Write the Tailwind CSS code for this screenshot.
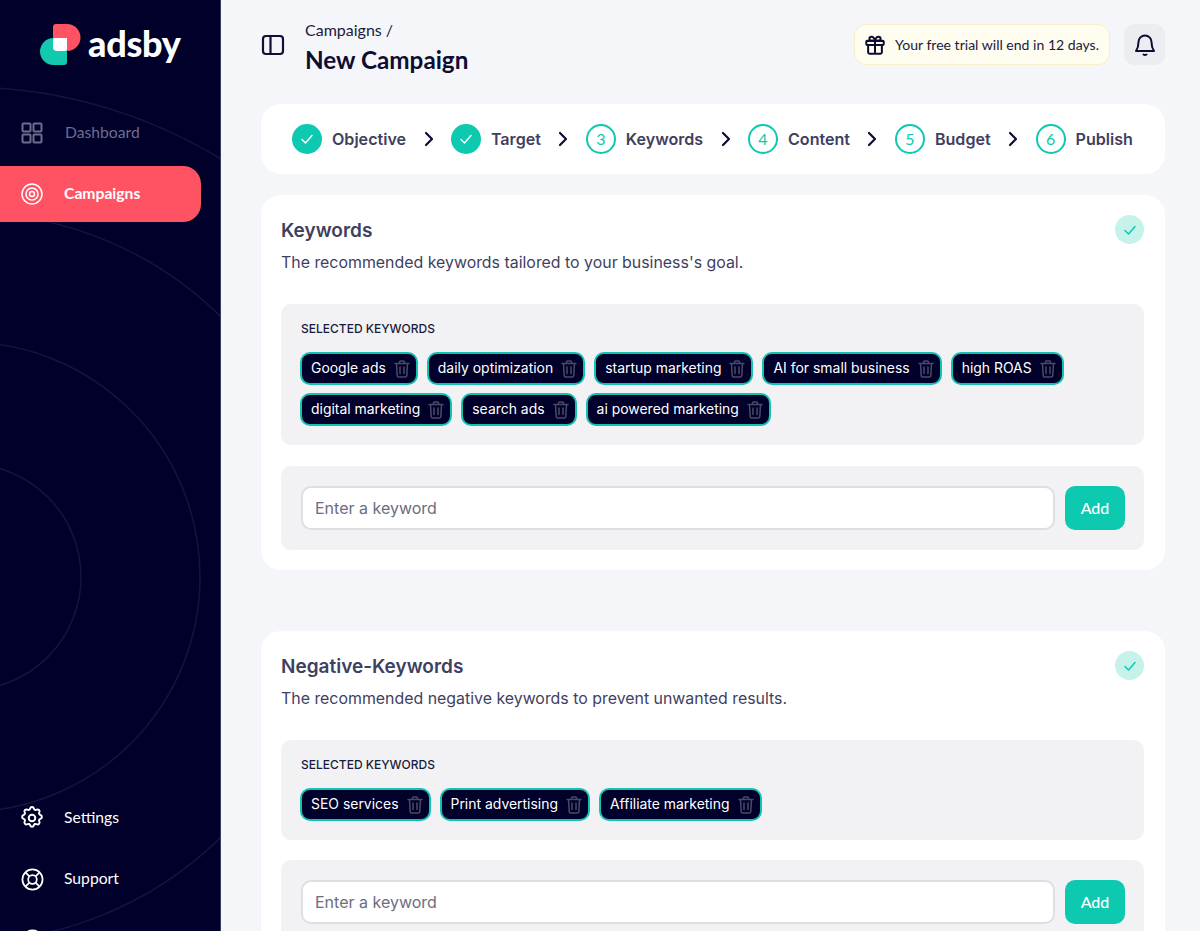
<!DOCTYPE html>
<html lang="en">
<head>
<meta charset="utf-8">
<title>New Campaign</title>
<script src="https://cdn.jsdelivr.net/npm/@tailwindcss/browser@4"></script>
</head>
<body class="m-0 overflow-hidden">
<div class="flex h-[931px] w-[1200px] overflow-hidden bg-[#f5f6f9] font-['Lato',sans-serif]">
  <aside class="relative flex h-[931px] w-[221px] shrink-0 flex-col overflow-hidden border-r border-[#3b3b60] bg-[#00002a]">
    <svg class="absolute left-0 top-0" width="220" height="931" fill="none" stroke="#15153a" stroke-width="1.5">
      <circle cx="-32" cy="577" r="113"/><circle cx="-35" cy="577" r="235"/><circle cx="-35" cy="577" r="365"/><circle cx="-35" cy="577" r="490"/>
    </svg>
    <div class="relative flex h-[105px] shrink-0 items-start pl-[40px] pt-[24px]">
      <svg width="41" height="42" viewBox="0 0 41 42" class="shrink-0">
        <path d="M13 3a3 3 0 0 1 3-3h11a13.500 13.500 0 0 1 0 27H13z" fill="#ff5364"/>
        <path d="M27 14v24a3 3 0 0 1-3 3H13.500a13.500 13.500 0 0 1 0-27z" fill="#12c9ad"/>
        <path d="M15 14h12v11a2 2 0 0 1-2 2h-8a4 4 0 0 1-4-4v-7a2 2 0 0 1 2-2z" fill="#fff"/>
      </svg>
      <span class="ml-[7px] mt-[-3px] text-[36px] font-black leading-[44px] tracking-[-0.3px] text-white">adsby</span>
    </div>
    <nav class="relative flex shrink-0 flex-col gap-[5px] pr-[19px]">
      <a class="flex h-[56px] items-center gap-[22px] pl-[21px] text-[15.7px] text-[#6d6d8e]">
        <svg width="22" height="22" viewBox="0 0 22 22" fill="none" stroke="#6d6d8e" stroke-width="2"><rect x="1.500" y="1.500" width="8" height="8" rx="1"/><rect x="12.500" y="1.500" width="8" height="8" rx="1"/><rect x="1.500" y="12.500" width="8" height="8" rx="1"/><rect x="12.500" y="12.500" width="8" height="8" rx="1"/></svg>
        <span>Dashboard</span>
      </a>
      <a class="flex h-[56px] items-center gap-[21px] rounded-r-[18px] bg-[#ff5364] pl-[21px] text-[15.7px] font-bold text-white">
        <svg width="22" height="22" viewBox="0 0 22 22" fill="none" stroke="#fff" stroke-width="1.500"><circle cx="11" cy="11" r="10"/><circle cx="11" cy="11" r="6"/><circle cx="11" cy="11" r="2.500"/></svg>
        <span>Campaigns</span>
      </a>
    </nav>
    <nav class="relative mt-[568px] flex shrink-0 flex-col gap-[5px] pr-[19px]">
      <a class="flex h-[56px] items-center gap-[20px] pl-[20px] text-[15.7px] text-white">
        <svg width="24" height="24" viewBox="1 1 22 22" fill="none" stroke="#fff" stroke-width="1.800" stroke-linecap="round" stroke-linejoin="round"><path d="M10.300 3.300c.4-1.800 3-1.800 3.400 0a1.700 1.700 0 0 0 2.600 1.100c1.500-.9 3.300.8 2.400 2.400a1.700 1.700 0 0 0 1 2.500c1.800.5 1.800 3 0 3.500a1.700 1.700 0 0 0-1 2.500c.9 1.500-.9 3.300-2.400 2.400a1.700 1.700 0 0 0-2.600 1c-.4 1.800-3 1.800-3.400 0a1.700 1.700 0 0 0-2.600-1c-1.500.9-3.300-.9-2.400-2.400a1.700 1.700 0 0 0-1-2.500c-1.800-.5-1.800-3 0-3.500a1.700 1.700 0 0 0 1-2.500c-.9-1.600.9-3.300 2.400-2.400a1.700 1.700 0 0 0 2.600-1.100z"/><circle cx="12" cy="12" r="3"/></svg>
        <span>Settings</span>
      </a>
      <a class="flex h-[56px] items-center gap-[20px] pl-[21px] text-[15.7px] text-white">
        <svg width="23" height="23" viewBox="0 0 24 24" fill="none" stroke="#fff" stroke-width="1.800"><circle cx="12" cy="12" r="10.500"/><circle cx="12" cy="12" r="4.500"/><path d="M4.600 4.600l4.200 4.200M19.400 4.600l-4.200 4.200M4.600 19.400l4.200-4.200M19.400 19.400l-4.200-4.200"/></svg>
        <span>Support</span>
      </a>
      <a class="flex h-[56px] items-center pl-[21px]">
        <svg width="23" height="23" viewBox="0 0 24 24" fill="none" stroke="#fff" stroke-width="1.800"><circle cx="12" cy="12" r="10.500"/></svg>
      </a>
    </nav>
  </aside>

  <main class="flex min-w-0 flex-1 flex-col pl-[40px] pr-[35px]">
    <header class="flex h-[104px] shrink-0 items-start pt-[19px]">
      <svg class="mt-[15px] shrink-0" width="24" height="24" viewBox="0 0 24 24" fill="none" stroke="#101035" stroke-width="2.200"><rect x="2" y="2" width="20" height="18" rx="3"/><path d="M9.500 2v18"/></svg>
      <div class="ml-[20px] flex flex-col">
        <div class="text-[16px] leading-[22px] text-[#1a1a3c]">Campaigns /</div>
        <div class="mt-[3px] text-[24.25px] font-bold leading-[32px] text-[#0d0d33]">New Campaign</div>
      </div>
      <div class="ml-auto mt-[5px] flex items-center gap-[14px]">
        <div class="flex h-[41px] w-[256px] items-center gap-[9px] rounded-[12px] border border-[#f8f0c4] bg-[#fffdf0] pl-[9px]">
          <svg width="22" height="22" viewBox="0 0 24 24" fill="none" stroke="#0d0d33" stroke-width="2.200" stroke-linecap="round" stroke-linejoin="round"><rect x="2.500" y="7.500" width="19" height="4.500" rx="1"/><path d="M4.500 12v8a1.500 1.500 0 0 0 1.500 1.500h12a1.500 1.500 0 0 0 1.500-1.500v-8M12 7.500v14M12 7.500H8.200a2.300 2.300 0 1 1 0-4.600c2.800 0 3.800 4.600 3.800 4.600zM12 7.500h3.800a2.300 2.300 0 1 0 0-4.600c-2.800 0-3.800 4.600-3.800 4.600z"/></svg>
          <span class="text-[14.05px] text-[#1a1a3c]">Your free trial will end in 12 days.</span>
        </div>
        <button class="flex h-[41px] w-[41px] items-center justify-center rounded-[10px] bg-[#ecedf1]">
          <svg width="24" height="24" viewBox="0 0 24 24" fill="none" stroke="#0d0d33" stroke-width="2" stroke-linecap="round" stroke-linejoin="round"><path d="M12 2.500a6.500 6.500 0 0 0-6.500 6.500c0 5.500-2.500 9-2.500 9h18s-2.500-3.500-2.500-9A6.500 6.500 0 0 0 12 2.500zM10.500 21.500c.8.600 2.200.600 3 0"/></svg>
        </button>
      </div>
    </header>

    <section class="flex h-[70px] shrink-0 items-center justify-between rounded-[20px] bg-white pl-[31px] pr-[32px]">
      <div class="flex items-center gap-[10px]"><span class="flex h-[30px] w-[30px] items-center justify-center rounded-full bg-[#0cc9b0]"><svg width="16" height="16" viewBox="0 0 16 16" fill="none" stroke="#fff" stroke-width="1.500" stroke-linecap="round" stroke-linejoin="round"><path d="M3 8.500l3.500 3.500L13 4.500"/></svg></span><span class="font-['Inter',sans-serif] text-[16.1px] font-semibold text-[#3f3f5f]">Objective</span></div>
      <svg width="12" height="16" viewBox="0 0 12 16" fill="none" stroke="#0d0d33" stroke-width="2.200" stroke-linecap="round" stroke-linejoin="round"><path d="M3 2l6 6-6 6"/></svg>
      <div class="flex items-center gap-[10px]"><span class="flex h-[30px] w-[30px] items-center justify-center rounded-full bg-[#0cc9b0]"><svg width="16" height="16" viewBox="0 0 16 16" fill="none" stroke="#fff" stroke-width="1.500" stroke-linecap="round" stroke-linejoin="round"><path d="M3 8.500l3.500 3.500L13 4.500"/></svg></span><span class="font-['Inter',sans-serif] text-[16.1px] font-semibold text-[#3f3f5f]">Target</span></div>
      <svg width="12" height="16" viewBox="0 0 12 16" fill="none" stroke="#0d0d33" stroke-width="2.200" stroke-linecap="round" stroke-linejoin="round"><path d="M3 2l6 6-6 6"/></svg>
      <div class="flex items-center gap-[10px]"><span class="flex h-[30px] w-[30px] items-center justify-center rounded-full border-2 border-[#0cc9b0] text-[16px] text-[#0cc9b0]">3</span><span class="font-['Inter',sans-serif] text-[16.1px] font-semibold text-[#3f3f5f]">Keywords</span></div>
      <svg width="12" height="16" viewBox="0 0 12 16" fill="none" stroke="#0d0d33" stroke-width="2.200" stroke-linecap="round" stroke-linejoin="round"><path d="M3 2l6 6-6 6"/></svg>
      <div class="flex items-center gap-[10px]"><span class="flex h-[30px] w-[30px] items-center justify-center rounded-full border-2 border-[#0cc9b0] text-[16px] text-[#0cc9b0]">4</span><span class="font-['Inter',sans-serif] text-[16.1px] font-semibold text-[#3f3f5f]">Content</span></div>
      <svg width="12" height="16" viewBox="0 0 12 16" fill="none" stroke="#0d0d33" stroke-width="2.200" stroke-linecap="round" stroke-linejoin="round"><path d="M3 2l6 6-6 6"/></svg>
      <div class="flex items-center gap-[10px]"><span class="flex h-[30px] w-[30px] items-center justify-center rounded-full border-2 border-[#0cc9b0] text-[16px] text-[#0cc9b0]">5</span><span class="font-['Inter',sans-serif] text-[16.1px] font-semibold text-[#3f3f5f]">Budget</span></div>
      <svg width="12" height="16" viewBox="0 0 12 16" fill="none" stroke="#0d0d33" stroke-width="2.200" stroke-linecap="round" stroke-linejoin="round"><path d="M3 2l6 6-6 6"/></svg>
      <div class="flex items-center gap-[10px]"><span class="flex h-[30px] w-[30px] items-center justify-center rounded-full border-2 border-[#0cc9b0] text-[16px] text-[#0cc9b0]">6</span><span class="font-['Inter',sans-serif] text-[16.1px] font-semibold text-[#3f3f5f]">Publish</span></div>
    </section>

    <section class="mt-[21px] shrink-0 rounded-[20px] bg-white p-[20px] pr-[21px]">
      <div class="flex items-start justify-between">
        <div class="pt-[2px]">
          <h2 class="font-['Inter',sans-serif] text-[19px] font-semibold leading-[28px] text-[#3f3f5f]">Keywords</h2>
          <p class="mt-[6px] font-['Inter',sans-serif] text-[15.9px] leading-[24px] text-[#3f3f5f]">The recommended keywords tailored to your business's goal.</p>
        </div>
        <span class="flex h-[29px] w-[29px] items-center justify-center rounded-full bg-[#c5f2eb]"><svg width="16" height="16" viewBox="0 0 16 16" fill="none" stroke="#0cc9b0" stroke-width="1.500" stroke-linecap="round" stroke-linejoin="round"><path d="M3 8.500l3.500 3.500L13 4.500"/></svg></span>
      </div>
      <div class="mt-[29px] rounded-[10px] bg-[#f2f2f5] px-[20px] pb-[19px] pt-[17px] font-['Inter',sans-serif]">
        <div class="text-[12px] font-medium leading-[16px] text-[#1a1a3c]">SELECTED KEYWORDS</div>
        <div class="mt-[15px] -ml-px flex flex-wrap gap-x-[9px] gap-y-[8px]">
          <span class="flex h-[33px] items-center gap-[7px] rounded-[10px] border-2 border-[#12c2b0] bg-[#00002a] pl-[9px] pr-[5px] text-[13.95px] text-white">Google ads<svg width="18" height="20" viewBox="1 0 18 20" fill="none" stroke="#4a4a68" stroke-width="1.500" stroke-linecap="round" stroke-linejoin="round"><path d="M3 4.500h14M7.500 4.500V3a1 1 0 0 1 1-1h3a1 1 0 0 1 1 1v1.500M4.500 4.500l.7 12a1.500 1.500 0 0 0 1.500 1.500h6.600a1.500 1.500 0 0 0 1.500-1.500l.7-12M8 8v6.500M12 8v6.500"/></svg></span>
          <span class="flex h-[33px] items-center gap-[7px] rounded-[10px] border-2 border-[#12c2b0] bg-[#00002a] pl-[9px] pr-[5px] text-[13.95px] text-white">daily optimization<svg width="18" height="20" viewBox="1 0 18 20" fill="none" stroke="#4a4a68" stroke-width="1.500" stroke-linecap="round" stroke-linejoin="round"><path d="M3 4.500h14M7.500 4.500V3a1 1 0 0 1 1-1h3a1 1 0 0 1 1 1v1.500M4.500 4.500l.7 12a1.500 1.500 0 0 0 1.500 1.500h6.600a1.500 1.500 0 0 0 1.500-1.500l.7-12M8 8v6.500M12 8v6.500"/></svg></span>
          <span class="flex h-[33px] items-center gap-[7px] rounded-[10px] border-2 border-[#12c2b0] bg-[#00002a] pl-[9px] pr-[5px] text-[13.95px] text-white">startup marketing<svg width="18" height="20" viewBox="1 0 18 20" fill="none" stroke="#4a4a68" stroke-width="1.500" stroke-linecap="round" stroke-linejoin="round"><path d="M3 4.500h14M7.500 4.500V3a1 1 0 0 1 1-1h3a1 1 0 0 1 1 1v1.500M4.500 4.500l.7 12a1.500 1.500 0 0 0 1.500 1.500h6.600a1.500 1.500 0 0 0 1.500-1.500l.7-12M8 8v6.500M12 8v6.500"/></svg></span>
          <span class="flex h-[33px] items-center gap-[7px] rounded-[10px] border-2 border-[#12c2b0] bg-[#00002a] pl-[9px] pr-[5px] text-[13.95px] text-white">AI for small business<svg width="18" height="20" viewBox="1 0 18 20" fill="none" stroke="#4a4a68" stroke-width="1.500" stroke-linecap="round" stroke-linejoin="round"><path d="M3 4.500h14M7.500 4.500V3a1 1 0 0 1 1-1h3a1 1 0 0 1 1 1v1.500M4.500 4.500l.7 12a1.500 1.500 0 0 0 1.500 1.500h6.600a1.500 1.500 0 0 0 1.500-1.500l.7-12M8 8v6.500M12 8v6.500"/></svg></span>
          <span class="flex h-[33px] items-center gap-[7px] rounded-[10px] border-2 border-[#12c2b0] bg-[#00002a] pl-[9px] pr-[5px] text-[13.95px] text-white">high ROAS<svg width="18" height="20" viewBox="1 0 18 20" fill="none" stroke="#4a4a68" stroke-width="1.500" stroke-linecap="round" stroke-linejoin="round"><path d="M3 4.500h14M7.500 4.500V3a1 1 0 0 1 1-1h3a1 1 0 0 1 1 1v1.500M4.500 4.500l.7 12a1.500 1.500 0 0 0 1.500 1.500h6.600a1.500 1.500 0 0 0 1.500-1.500l.7-12M8 8v6.500M12 8v6.500"/></svg></span>
          <span class="flex h-[33px] items-center gap-[7px] rounded-[10px] border-2 border-[#12c2b0] bg-[#00002a] pl-[9px] pr-[5px] text-[13.95px] text-white">digital marketing<svg width="18" height="20" viewBox="1 0 18 20" fill="none" stroke="#4a4a68" stroke-width="1.500" stroke-linecap="round" stroke-linejoin="round"><path d="M3 4.500h14M7.500 4.500V3a1 1 0 0 1 1-1h3a1 1 0 0 1 1 1v1.500M4.500 4.500l.7 12a1.500 1.500 0 0 0 1.500 1.500h6.600a1.500 1.500 0 0 0 1.500-1.500l.7-12M8 8v6.500M12 8v6.500"/></svg></span>
          <span class="flex h-[33px] items-center gap-[7px] rounded-[10px] border-2 border-[#12c2b0] bg-[#00002a] pl-[9px] pr-[5px] text-[13.95px] text-white">search ads<svg width="18" height="20" viewBox="1 0 18 20" fill="none" stroke="#4a4a68" stroke-width="1.500" stroke-linecap="round" stroke-linejoin="round"><path d="M3 4.500h14M7.500 4.500V3a1 1 0 0 1 1-1h3a1 1 0 0 1 1 1v1.500M4.500 4.500l.7 12a1.500 1.500 0 0 0 1.500 1.500h6.600a1.500 1.500 0 0 0 1.500-1.500l.7-12M8 8v6.500M12 8v6.500"/></svg></span>
          <span class="flex h-[33px] items-center gap-[7px] rounded-[10px] border-2 border-[#12c2b0] bg-[#00002a] pl-[9px] pr-[5px] text-[13.95px] text-white">ai powered marketing<svg width="18" height="20" viewBox="1 0 18 20" fill="none" stroke="#4a4a68" stroke-width="1.500" stroke-linecap="round" stroke-linejoin="round"><path d="M3 4.500h14M7.500 4.500V3a1 1 0 0 1 1-1h3a1 1 0 0 1 1 1v1.500M4.500 4.500l.7 12a1.500 1.500 0 0 0 1.500 1.500h6.600a1.500 1.500 0 0 0 1.500-1.500l.7-12M8 8v6.500M12 8v6.500"/></svg></span>
        </div>
      </div>
      <div class="mt-[21px] flex gap-[10px] rounded-[10px] bg-[#f2f2f5] py-[20px] pl-[20px] pr-[19px]">
        <input class="h-[44px] flex-1 rounded-[10px] border-2 border-[#dedee4] bg-white px-[12px] font-['Inter',sans-serif] text-[16px] placeholder:text-[#6d6d80]" placeholder="Enter a keyword">
        <button class="h-[44px] w-[60px] rounded-[10px] bg-[#0cc9b0] text-[16px] font-medium text-white">Add</button>
      </div>
    </section>

    <section class="mt-[61px] shrink-0 rounded-[20px] bg-white p-[20px] pr-[21px]">
      <div class="flex items-start justify-between">
        <div class="pt-[2px]">
          <h2 class="font-['Inter',sans-serif] text-[19px] font-semibold leading-[28px] text-[#3f3f5f]">Negative-Keywords</h2>
          <p class="mt-[6px] font-['Inter',sans-serif] text-[15.9px] leading-[24px] text-[#3f3f5f]">The recommended negative keywords to prevent unwanted results.</p>
        </div>
        <span class="flex h-[29px] w-[29px] items-center justify-center rounded-full bg-[#c5f2eb]"><svg width="16" height="16" viewBox="0 0 16 16" fill="none" stroke="#0cc9b0" stroke-width="1.500" stroke-linecap="round" stroke-linejoin="round"><path d="M3 8.500l3.500 3.500L13 4.500"/></svg></span>
      </div>
      <div class="mt-[29px] rounded-[10px] bg-[#f2f2f5] px-[20px] pb-[19px] pt-[17px] font-['Inter',sans-serif]">
        <div class="text-[12px] font-medium leading-[16px] text-[#1a1a3c]">SELECTED KEYWORDS</div>
        <div class="mt-[15px] -ml-px flex flex-wrap gap-x-[9px] gap-y-[8px]">
          <span class="flex h-[33px] items-center gap-[7px] rounded-[10px] border-2 border-[#12c2b0] bg-[#00002a] pl-[9px] pr-[5px] text-[13.95px] text-white">SEO services<svg width="18" height="20" viewBox="1 0 18 20" fill="none" stroke="#4a4a68" stroke-width="1.500" stroke-linecap="round" stroke-linejoin="round"><path d="M3 4.500h14M7.500 4.500V3a1 1 0 0 1 1-1h3a1 1 0 0 1 1 1v1.500M4.500 4.500l.7 12a1.500 1.500 0 0 0 1.500 1.500h6.600a1.500 1.500 0 0 0 1.500-1.500l.7-12M8 8v6.500M12 8v6.500"/></svg></span>
          <span class="flex h-[33px] items-center gap-[7px] rounded-[10px] border-2 border-[#12c2b0] bg-[#00002a] pl-[9px] pr-[5px] text-[13.95px] text-white">Print advertising<svg width="18" height="20" viewBox="1 0 18 20" fill="none" stroke="#4a4a68" stroke-width="1.500" stroke-linecap="round" stroke-linejoin="round"><path d="M3 4.500h14M7.500 4.500V3a1 1 0 0 1 1-1h3a1 1 0 0 1 1 1v1.500M4.500 4.500l.7 12a1.500 1.500 0 0 0 1.500 1.500h6.600a1.500 1.500 0 0 0 1.500-1.500l.7-12M8 8v6.500M12 8v6.500"/></svg></span>
          <span class="flex h-[33px] items-center gap-[7px] rounded-[10px] border-2 border-[#12c2b0] bg-[#00002a] pl-[9px] pr-[5px] text-[13.95px] text-white">Affiliate marketing<svg width="18" height="20" viewBox="1 0 18 20" fill="none" stroke="#4a4a68" stroke-width="1.500" stroke-linecap="round" stroke-linejoin="round"><path d="M3 4.500h14M7.500 4.500V3a1 1 0 0 1 1-1h3a1 1 0 0 1 1 1v1.500M4.500 4.500l.7 12a1.500 1.500 0 0 0 1.500 1.500h6.600a1.500 1.500 0 0 0 1.500-1.500l.7-12M8 8v6.500M12 8v6.500"/></svg></span>
        </div>
      </div>
      <div class="mt-[20px] flex gap-[10px] rounded-[10px] bg-[#f2f2f5] py-[20px] pl-[20px] pr-[19px]">
        <input class="h-[44px] flex-1 rounded-[10px] border-2 border-[#dedee4] bg-white px-[12px] font-['Inter',sans-serif] text-[16px] placeholder:text-[#6d6d80]" placeholder="Enter a keyword">
        <button class="h-[44px] w-[60px] rounded-[10px] bg-[#0cc9b0] text-[16px] font-medium text-white">Add</button>
      </div>
    </section>
  </main>
</div>
</body>
</html>
